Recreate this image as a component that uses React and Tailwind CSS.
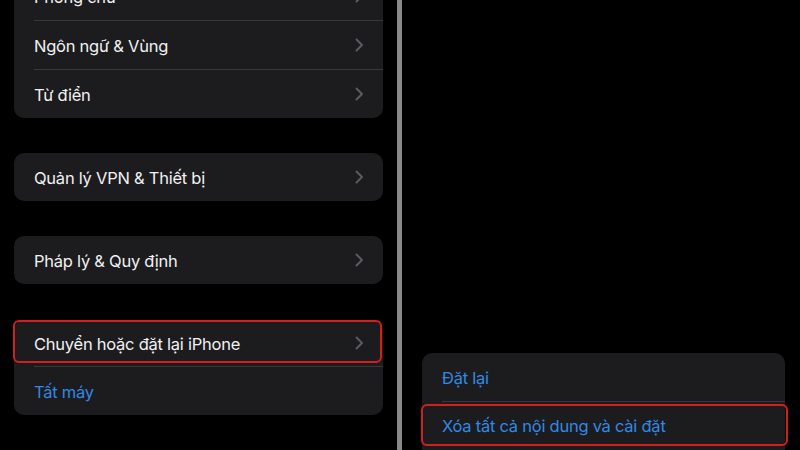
import React from 'react'

const Chevron = () => (
  <svg width="9" height="14" viewBox="0 0 9 14" fill="none" className="shrink-0">
    <path d="M1.5 1.5 L7 7 L1.5 12.5" stroke="#5b5b60" strokeWidth="2" strokeLinecap="round" strokeLinejoin="round" />
  </svg>
)

const Row = ({ label, blue, chevron = true, highlight, height = 'h-[48px]' }) => (
  <div className={`relative flex items-center justify-between pl-5 pr-[19px] ${height}`}>
    <span className={`pt-[2px] text-[16.5px] tracking-[-0.25px] ${blue ? 'text-[#3289e4]' : 'text-[#f1f1f3]'}`}>{label}</span>
    {chevron && <Chevron />}
    {highlight && (
      <div className="absolute -left-px right-px top-0 h-[43px] rounded-[6px] border-2 border-[#d31f1f]" />
    )}
  </div>
)

const Sep = () => (
  <div className="ml-5 h-px bg-[#38383b]" />
)

const Card = ({ className = '', children }) => (
  <div className={`rounded-[10px] bg-[#1c1c1e] ${className}`}>{children}</div>
)

export default function App() {
  return (
    <div
      className="flex h-[450px] w-[800px] overflow-hidden bg-black"
      style={{ fontFamily: 'Inter, "Noto Sans", sans-serif' }}
    >
      {/* left screen */}
      <div className="flex w-[397px] shrink-0 flex-col pl-[14px] pr-[14px]">
        <Card className="-mt-[28px]">
          <Row label="Phông chữ" />
          <Sep />
          <Row label="Ngôn ngữ & Vùng" />
          <Sep />
          <Row label="Từ điển" />
        </Card>
        <Card className="mt-[35px]">
          <Row label="Quản lý VPN & Thiết bị" />
        </Card>
        <Card className="mt-[35px]">
          <Row label="Pháp lý & Quy định" />
        </Card>
        <Card className="mt-[36px]">
          <Row label="Chuyển hoặc đặt lại iPhone" highlight height="h-[46px]" />
          <Sep />
          <Row label="Tất máy" blue chevron={false} />
        </Card>
      </div>

      {/* divider */}
      <div className="w-[5px] shrink-0 bg-[#8a8888]" />

      {/* right screen */}
      <div className="flex flex-1 flex-col pl-5 pr-[15px] pt-[353px]">
        <Card className="rounded-b-none">
          <Row label="Đặt lại" blue chevron={false} />
          <Sep />
          <div className="relative flex h-[48px] items-center pl-5">
            <span className="pt-[1px] text-[16.5px] tracking-[-0.25px] text-[#3289e4]">Xóa tất cả nội dung và cài đặt</span>
            <div className="absolute -left-px -right-[3px] top-[2px] h-[42px] rounded-[6px] border-2 border-[#d31f1f]" />
          </div>
        </Card>
      </div>
    </div>
  )
}
